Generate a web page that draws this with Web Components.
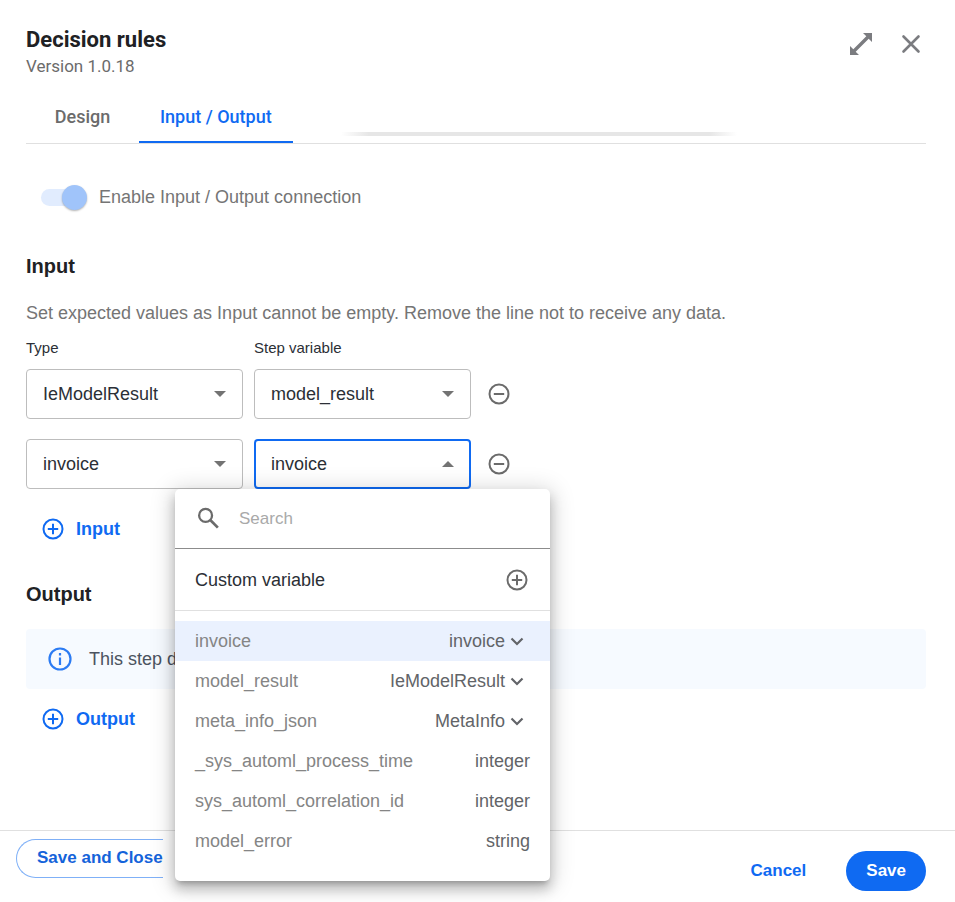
<!DOCTYPE html>
<html lang="en">
<head>
<meta charset="utf-8">
<meta name="viewport" content="width=device-width, initial-scale=1">
<title>Decision rules</title>
<style>
  :root {
    --accent: #0f6af2;
    --ink: #202124;
    --text: #2b2f36;
    --muted: #757575;
    --line: #e0e0e0;
    --sans: "Liberation Sans", Arial, sans-serif;
    --display: Roboto, "Liberation Sans", sans-serif;
  }

  body {
    margin: 0;
    background: #fff;
    color: var(--text);
    font: 18px/24px var(--sans);
  }
</style>
</head>
<body>
<step-dialog>
  <dialog-header slot="header" title-text="Decision rules">Version 1.0.18</dialog-header>

  <tab-bar slot="tabs">
    <tab-item>Design</tab-item>
    <tab-item active>Input / Output</tab-item>
  </tab-bar>

  <toggle-switch checked>Enable Input / Output connection</toggle-switch>

  <form-section heading="Input">
    <span slot="hint">Set expected values as Input cannot be empty. Remove the line not to receive any data.</span>
    <variable-row>
      <select-field label="Type" value="IeModelResult"></select-field>
      <select-field label="Step variable" value="model_result"></select-field>
    </variable-row>
    <variable-row>
      <select-field name="Type" value="invoice"></select-field>
      <select-field name="Step variable" value="invoice" open>
        <variable-menu slot="menu">
          <variable-option type="invoice" expandable selected>invoice</variable-option>
          <variable-option type="IeModelResult" expandable>model_result</variable-option>
          <variable-option type="MetaInfo" expandable>meta_info_json</variable-option>
          <variable-option type="integer">_sys_automl_process_time</variable-option>
          <variable-option type="integer">sys_automl_correlation_id</variable-option>
          <variable-option type="string">model_error</variable-option>
        </variable-menu>
      </select-field>
    </variable-row>
    <add-button slot="action">Input</add-button>
  </form-section>

  <form-section heading="Output">
    <info-note>This step d</info-note>
    <add-button slot="action">Output</add-button>
  </form-section>

  <dialog-footer slot="footer"></dialog-footer>
</step-dialog>

<script>
const ICONS = {
  expand: '<path d="M14 1h9v9l-3.300-3.300L6.700 19.700 10 23H1v-9l3.300 3.300L17.300 4.300z"/>',
  close: '<path d="M4.500 4.500l15 15M19.500 4.500l-15 15" fill="none" stroke="currentColor" stroke-width="2.600" stroke-linecap="round"/>',
  minus: '<g fill="none" stroke="currentColor" stroke-width="2"><circle cx="12" cy="12" r="9.500"/><path d="M6.800 12h10.400"/></g>',
  plus: '<g fill="none" stroke="currentColor" stroke-width="2"><circle cx="12" cy="12" r="9.500"/><path d="M6.800 12h10.400M12 6.800v10.400"/></g>',
  info: '<g fill="none" stroke="currentColor" stroke-width="2.200"><circle cx="12" cy="12" r="10.500"/><path d="M12 10.500v7.500M12 6v2.500"/></g>',
  search: '<circle cx="9.200" cy="9" r="6.200" fill="none" stroke="currentColor" stroke-width="2.200"/><path d="M13.700 13.500l7.300 7.300" fill="none" stroke="currentColor" stroke-width="2.600"/>',
  chevron: '<path d="M6.500 9.500l5.500 5.500 5.500-5.500" fill="none" stroke="currentColor" stroke-width="2.200"/>',
};

const icon = (name, size = 24) =>
  `<svg width="${size}" height="${size}" viewBox="0 0 24 24" fill="currentColor" aria-hidden="true">${ICONS[name]}</svg>`;

const BASE = `
  * { box-sizing: border-box; }
  :host { display: block; }
  :host([hidden]) { display: none; }
  svg { display: block; flex: none; }
  button {
    display: flex;
    align-items: center;
    margin: 0;
    padding: 0;
    border: 0;
    background: none;
    color: inherit;
    font: inherit;
    cursor: pointer;
  }
`;

/** Small base class: opens the shadow root and fills it from template(). */
class BaseElement extends HTMLElement {
  connectedCallback() {
    if (this.shadowRoot) return;
    this.attachShadow({ mode: 'open' });
    this.shadowRoot.innerHTML = `<style>${BASE}${this.styles()}</style>${this.template()}`;
  }

  attr(name) {
    return this.getAttribute(name) ?? '';
  }

  styles() {
    return '';
  }

  template() {
    return '<slot></slot>';
  }
}

class StepDialog extends BaseElement {
  styles() {
    return `
      :host {
        display: flex;
        flex-direction: column;
        min-height: 100vh;
      }
      .inner { padding: 26px 29px 0 26px; }
      main {
        display: flex;
        flex-direction: column;
        gap: 31px;
        padding-top: 40px;
      }
      footer { margin-top: auto; }
    `;
  }

  template() {
    return `
      <div class="inner">
        <slot name="header"></slot>
        <slot name="tabs"></slot>
        <main><slot></slot></main>
      </div>
      <footer><slot name="footer"></slot></footer>
    `;
  }
}

class DialogHeader extends BaseElement {
  styles() {
    return `
      :host {
        display: flex;
        justify-content: space-between;
        font-family: var(--display);
      }
      h1 {
        margin: 0;
        color: var(--ink);
        font-size: 22px;
        font-weight: 700;
        line-height: 27px;
      }
      p {
        margin: 0;
        color: #6b6b6b;
        font-size: 17px;
        line-height: 26px;
      }
      .actions {
        display: flex;
        align-items: center;
        align-self: flex-start;
        gap: 26px;
        padding: 6px 3px 0 0;
        color: #7b7c80;
      }
    `;
  }

  template() {
    return `
      <div>
        <h1>${this.attr('title-text')}</h1>
        <p><slot></slot></p>
      </div>
      <div class="actions">
        <button type="button" aria-label="Expand">${icon('expand')}</button>
        <button type="button" aria-label="Close">${icon('close')}</button>
      </div>
    `;
  }
}

class TabBar extends BaseElement {
  styles() {
    return `
      :host {
        position: relative;
        border-bottom: 1px solid var(--line);
        margin-top: 12px;
      }
      nav { display: flex; }
      /* soft shadow band that sits above the divider */
      .band {
        position: absolute;
        bottom: 7px;
        left: 35%;
        right: 21%;
        height: 4px;
        background: linear-gradient(90deg, transparent, #e6e6e6 7%, #e6e6e6 93%, transparent);
      }
    `;
  }

  template() {
    return `<nav role="tablist"><slot></slot></nav><div class="band"></div>`;
  }
}

class TabItem extends BaseElement {
  styles() {
    return `
      button {
        justify-content: center;
        min-width: 113px;
        height: 52px;
        padding: 2px 21px 0;
        border-bottom: 2px solid transparent;
        color: #6b6b6b;
        font: 500 18px/24px var(--display);
      }
      :host([active]) button {
        border-color: var(--accent);
        color: var(--accent);
      }
    `;
  }

  template() {
    return `<button type="button" role="tab" aria-selected="${this.hasAttribute('active')}"><slot></slot></button>`;
  }
}

class ToggleSwitch extends BaseElement {
  styles() {
    return `
      :host {
        margin-bottom: 13px;
        color: var(--muted);
      }
      label {
        display: flex;
        align-items: center;
        gap: 12px;
        width: fit-content;
        margin-left: 15px;
      }
      input {
        appearance: none;
        display: flex;
        align-items: center;
        position: relative;
        width: 46px;
        height: 26px;
        margin: 0;
      }
      input::before {
        content: "";
        width: 40px;
        height: 17px;
        border-radius: 9px;
        background: #e1ecfe;
      }
      input::after {
        content: "";
        position: absolute;
        left: 0;
        width: 25px;
        height: 25px;
        border-radius: 50%;
        background: #fafafa;
        box-shadow: 0 1px 2px rgba(0, 0, 0, .3);
      }
      input:checked::after {
        left: auto;
        right: 0;
        background: #a0c4fa;
      }
    `;
  }

  template() {
    return `
      <label>
        <input type="checkbox" role="switch" ${this.hasAttribute('checked') ? 'checked' : ''}>
        <span><slot></slot></span>
      </label>
    `;
  }
}

class FormSection extends BaseElement {
  styles() {
    return `
      h2 {
        margin: 0;
        color: var(--ink);
        font-size: 20px;
        line-height: 24px;
      }
      .hint {
        display: block;
        margin-top: 23px;
        color: var(--muted);
      }
      .rows {
        display: flex;
        flex-direction: column;
        gap: 20px;
        margin-top: 12px;
      }
      .action { margin-top: 18px; }
      :host([heading="Output"]) .hint { display: none; }
      :host([heading="Output"]) .rows { margin-top: 23px; }
      :host([heading="Output"]) .action { margin-top: 8px; }
    `;
  }

  template() {
    return `
      <h2>${this.attr('heading')}</h2>
      <span class="hint"><slot name="hint"></slot></span>
      <div class="rows"><slot></slot></div>
      <div class="action"><slot name="action"></slot></div>
    `;
  }
}

class VariableRow extends BaseElement {
  styles() {
    return `
      :host {
        display: flex;
        align-items: flex-end;
        gap: 11px;
      }
      ::slotted(select-field) { flex: 0 1 217px; }
      button {
        height: 50px;
        margin-left: 5px;
        color: #6b6b6b;
      }
    `;
  }

  template() {
    return `<slot></slot><button type="button" aria-label="Remove line">${icon('minus')}</button>`;
  }
}

class SelectField extends BaseElement {
  styles() {
    return `
      :host { position: relative; }
      label {
        display: block;
        padding-bottom: 10px;
        font-size: 15px;
        line-height: 22px;
      }
      .box {
        display: grid;
        align-items: center;
      }
      select, .arrow { grid-area: 1 / 1; }
      select {
        appearance: none;
        width: 100%;
        height: 50px;
        margin: 0;
        padding: 0 40px 0 16px;
        border: 1px solid #bdbdbd;
        border-radius: 4px;
        outline: none;
        background: #fff;
        color: var(--text);
        font: inherit;
      }
      .arrow {
        justify-self: end;
        margin-right: 17px;
        border: 6px solid transparent;
        border-top-color: #737373;
        border-bottom: 0;
        pointer-events: none;
      }
      :host([open]) select {
        padding-left: 15px;
        border: 2px solid var(--accent);
      }
      :host([open]) .arrow {
        border-top: 0;
        border-bottom: 6px solid #737373;
      }
      ::slotted([slot="menu"]) {
        position: absolute;
        top: 100%;
        left: -79px;
        z-index: 10;
      }
    `;
  }

  template() {
    const label = this.attr('label');
    return `
      ${label ? `<label for="control">${label}</label>` : ''}
      <div class="box">
        <select id="control" ${label ? '' : `aria-label="${this.attr('name')}"`}>
          <option>${this.attr('value')}</option>
        </select>
        <span class="arrow"></span>
      </div>
      <slot name="menu"></slot>
    `;
  }
}

class VariableMenu extends BaseElement {
  styles() {
    return `
      :host {
        width: 375px;
        border-radius: 5px;
        background: #fff;
        box-shadow: 0 5px 5px -3px rgba(0, 0, 0, .22), 0 8px 12px 1px rgba(0, 0, 0, .18), 0 3px 22px 4px rgba(0, 0, 0, .15);
      }
      .search {
        display: flex;
        align-items: center;
        gap: 18px;
        height: 60px;
        padding: 0 20px 0 21px;
        border-bottom: 1px solid #8c8c8c;
        color: #6b6b6b;
      }
      input {
        flex: 1;
        min-width: 0;
        padding: 0;
        border: 0;
        outline: 0;
        background: none;
        color: var(--text);
        font: 17px/24px var(--sans);
      }
      input::placeholder {
        color: #a9a9a9;
        opacity: 1;
      }
      .custom {
        justify-content: space-between;
        width: 100%;
        height: 62px;
        padding: 0 21px 0 20px;
        border-bottom: 1px solid var(--line);
      }
      .custom svg { color: #6b6b6b; }
      .list { padding: 10px 0 20px; }
    `;
  }

  template() {
    return `
      <div class="search">
        ${icon('search', 25)}
        <input type="search" placeholder="Search" aria-label="Search">
      </div>
      <button class="custom" type="button">Custom variable ${icon('plus')}</button>
      <div class="list" role="listbox" aria-label="Variables"><slot></slot></div>
    `;
  }
}

class VariableOption extends BaseElement {
  styles() {
    return `
      button {
        justify-content: space-between;
        width: 100%;
        height: 40px;
        padding: 0 20px;
        color: #858585;
      }
      :host([selected]) button { background: #eaf1fe; }
      .type {
        display: flex;
        align-items: center;
        color: #626468;
      }
      :host([expandable]) .type { margin-right: 1px; }
    `;
  }

  template() {
    return `
      <button type="button" role="option" aria-selected="${this.hasAttribute('selected')}">
        <slot></slot>
        <span class="type">${this.attr('type')}${this.hasAttribute('expandable') ? icon('chevron') : ''}</span>
      </button>
    `;
  }
}

class AddButton extends BaseElement {
  styles() {
    return `
      button {
        gap: 11px;
        height: 44px;
        padding: 0 15px;
        color: var(--accent);
        font-weight: 700;
      }
    `;
  }

  template() {
    return `<button type="button">${icon('plus')}<span><slot></slot></span></button>`;
  }
}

class InfoNote extends BaseElement {
  styles() {
    return `
      :host {
        display: flex;
        align-items: center;
        gap: 17px;
        height: 60px;
        padding: 0 22px;
        border-radius: 4px;
        background: #f6faff;
        color: #4b5360;
      }
      svg { color: #2b7bf3; }
    `;
  }

  template() {
    return `${icon('info')}<span><slot></slot></span>`;
  }
}

class DialogFooter extends BaseElement {
  styles() {
    return `
      :host {
        display: flex;
        justify-content: space-between;
        align-items: flex-start;
        padding: 8px 29px 11px 16px;
        border-top: 1px solid var(--line);
        color: var(--accent);
        font-size: 17px;
        font-weight: 700;
      }
      .outline {
        height: 39px;
        padding: 0 0 2px 20px;
        border: 1px solid #7fb0f7;
        border-right: 0;
        border-radius: 20px 0 0 20px;
        color: #1463da;
      }
      .actions {
        display: flex;
        gap: 20px;
        padding-top: 12px;
      }
      .actions button {
        height: 40px;
        padding: 0 20px;
        border-radius: 20px;
      }
      .actions .primary {
        background: var(--accent);
        color: #fff;
      }
    `;
  }

  template() {
    return `
      <button class="outline" type="button">Save and Close</button>
      <div class="actions">
        <button type="button">Cancel</button>
        <button class="primary" type="submit">Save</button>
      </div>
    `;
  }
}

customElements.define('step-dialog', StepDialog);
customElements.define('dialog-header', DialogHeader);
customElements.define('tab-bar', TabBar);
customElements.define('tab-item', TabItem);
customElements.define('toggle-switch', ToggleSwitch);
customElements.define('form-section', FormSection);
customElements.define('variable-row', VariableRow);
customElements.define('select-field', SelectField);
customElements.define('variable-menu', VariableMenu);
customElements.define('variable-option', VariableOption);
customElements.define('add-button', AddButton);
customElements.define('info-note', InfoNote);
customElements.define('dialog-footer', DialogFooter);
</script>
</body>
</html>
